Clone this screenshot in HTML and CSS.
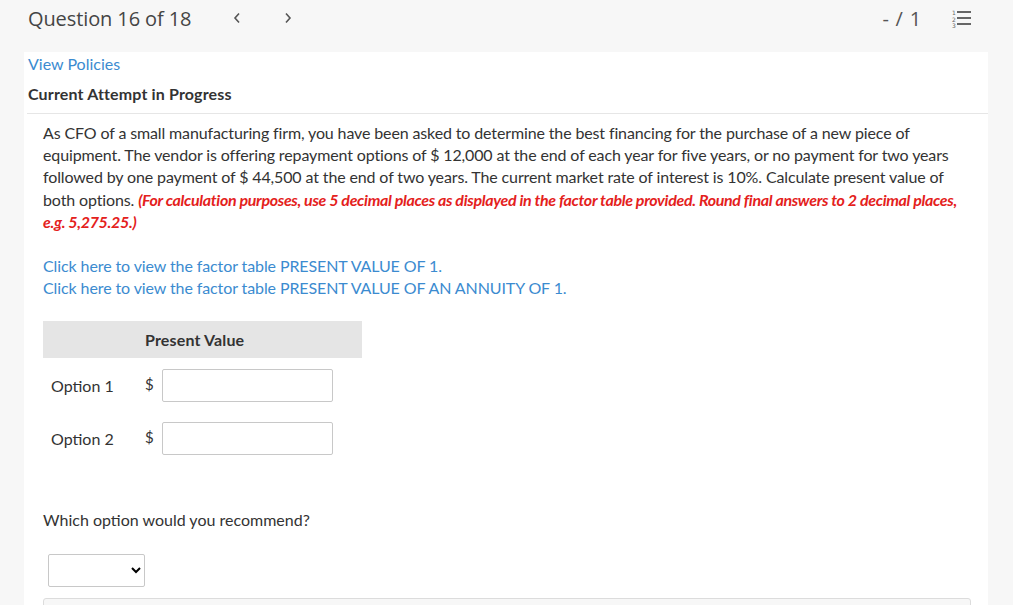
FILE: index.html
```html
<!DOCTYPE html>
<html>
<head>
<meta charset="utf-8">
<link rel="stylesheet" href="styles.css">
</head>
<body>
<header class="topbar">
  <div class="qtitle">Question 16 of 18</div>
  <div class="navs">
    <svg class="chev" width="8" height="12" viewBox="0 0 8 12"><path d="M6 1.5 L2 6 L6 10.5" fill="none" stroke="#555" stroke-width="1.6"/></svg>
    <svg class="chev" width="8" height="12" viewBox="0 0 8 12"><path d="M2 1.5 L6 6 L2 10.5" fill="none" stroke="#555" stroke-width="1.6"/></svg>
  </div>
  <div class="spacer"></div>
  <div class="score">- / 1</div>
  <svg class="listicon" width="22" height="20" viewBox="0 0 22 20">
    <text x="1" y="7" class="num">1</text>
    <text x="1" y="13.5" class="num">2</text>
    <text x="1" y="20" class="num">3</text>
    <rect x="6" y="3" width="14" height="2" fill="#666"/>
    <rect x="6" y="9" width="14" height="2" fill="#666"/>
    <rect x="6" y="15" width="14" height="2" fill="#666"/>
  </svg>
</header>
<main class="panel">
  <a class="policies">View Policies</a>
  <div class="attempt">Current Attempt in Progress</div>
  <div class="rule"></div>
  <section class="question">
    <p class="prompt">As CFO of a small manufacturing firm, you have been asked to determine the best financing for the purchase of a new piece of equipment. The vendor is offering repayment options of $ 12,000 at the end of each year for five years, or no payment for two years followed by one payment of $ 44,500 at the end of two years. The current market rate of interest is 10%. Calculate present value of both options. <em class="note">(For calculation purposes, use 5 decimal places as displayed in the factor table provided. Round final answers to 2 decimal places, e.g. 5,275.25.)</em></p>
    <div class="links">
      <a>Click here to view the factor table PRESENT VALUE OF 1.</a>
      <a>Click here to view the factor table PRESENT VALUE OF AN ANNUITY OF 1.</a>
    </div>
    <div class="pvtable">
      <div class="thead"><span class="thcell">Present Value</span></div>
      <div class="row">
        <span class="lbl">Option 1</span>
        <span class="dollar">$</span>
        <input class="field" type="text">
      </div>
      <div class="row">
        <span class="lbl">Option 2</span>
        <span class="dollar">$</span>
        <input class="field" type="text">
      </div>
    </div>
    <p class="which">Which option would you recommend?</p>
    <select class="choice"><option></option></select>
    <div class="bottombox"></div>
  </section>
</main>
</body>
</html>
```
FILE: styles.css
```css
html, body {
  margin: 0;
  padding: 0;
}
body {
  background: #f7f7f7;
  font-family: Lato, "Liberation Sans", sans-serif;
  color: #333;
  height: 605px;
  overflow: hidden;
}
.topbar {
  display: flex;
  align-items: center;
  height: 36px;
  padding: 0 40px 0 28px;
  font-family: "Open Sans", "Liberation Sans", sans-serif;
  color: #454545;
}
.qtitle {
  font-size: 20px;
  letter-spacing: -0.1px;
}
.navs {
  display: flex;
  gap: 43px;
  margin-left: 42px;
  margin-top: -1px;
}
.chev { display: block; }
.spacer { flex: 1; }
.score {
  font-size: 20px;
  color: #555;
  margin-right: 29px;
  letter-spacing: 0.8px;
}
.listicon { display: block; }
.num {
  font-family: "DejaVu Sans", sans-serif;
  font-size: 6px;
  fill: #666;
}
.panel {
  display: block;
  margin: 16px 0 0 24px;
  width: 964px;
  background: #fff;
  padding: 2px 0 0 4px;
  box-sizing: border-box;
  height: 560px;
}
.policies {
  display: block;
  color: #3b8bd0;
  font-size: 16px;
  line-height: 20px;
}
.attempt {
  font-weight: bold;
  font-size: 16px;
  line-height: 20px;
  margin-top: 10px;
  color: #333;
  letter-spacing: 0.15px;
}
.rule {
  height: 1px;
  background: #e6e6e6;
  margin: 9px 0 0 -1px;
}
.question {
  padding: 8px 17px 0 15px;
}
.prompt {
  margin: 0;
  font-size: 16px;
  line-height: 22.2px;
  color: #333;
  letter-spacing: -0.13px;
}
.note {
  color: #e4211c;
  font-weight: bold;
  font-style: italic;
  letter-spacing: -0.33px;
}
.links {
  display: flex;
  flex-direction: column;
  margin-top: 22px;
  font-size: 16px;
  line-height: 22px;
  letter-spacing: -0.1px;
}
.links a { color: #3b8bd0; }
.pvtable {
  margin-top: 22px;
  width: 319px;
}
.thead {
  background: #e5e5e5;
  height: 37px;
  display: flex;
  align-items: center;
  padding-left: 102px;
}
.thcell {
  font-weight: bold;
  font-size: 16px;
  color: #333;
  letter-spacing: 0.15px;
}
.row {
  display: flex;
  align-items: center;
  height: 33px;
  margin-top: 11px;
}
.row + .row { margin-top: 20px; }
.lbl {
  width: 102px;
  padding-left: 8px;
  box-sizing: border-box;
  font-size: 16px;
  color: #333;
}
.dollar {
  width: 17px;
  font-size: 15px;
  margin-top: -4px;
}
.field {
  width: 171px;
  height: 33px;
  box-sizing: border-box;
  border: 1px solid #c8c8c8;
  border-radius: 2px;
  margin: 0;
  padding: 0;
}
.which {
  margin: 54px 0 0 0;
  font-size: 16px;
  line-height: 22px;
}
.choice {
  display: block;
  margin: 23px 0 0 5px;
  width: 97px;
  height: 33px;
  background: #fff;
  border: 1px solid #c8c8c8;
  border-radius: 2px;
}
.bottombox {
  margin-top: 11px;
  height: 30px;
  border: 1px solid #dcdcdc;
  border-radius: 3px;
  background: #f7f7f7;
}
```
